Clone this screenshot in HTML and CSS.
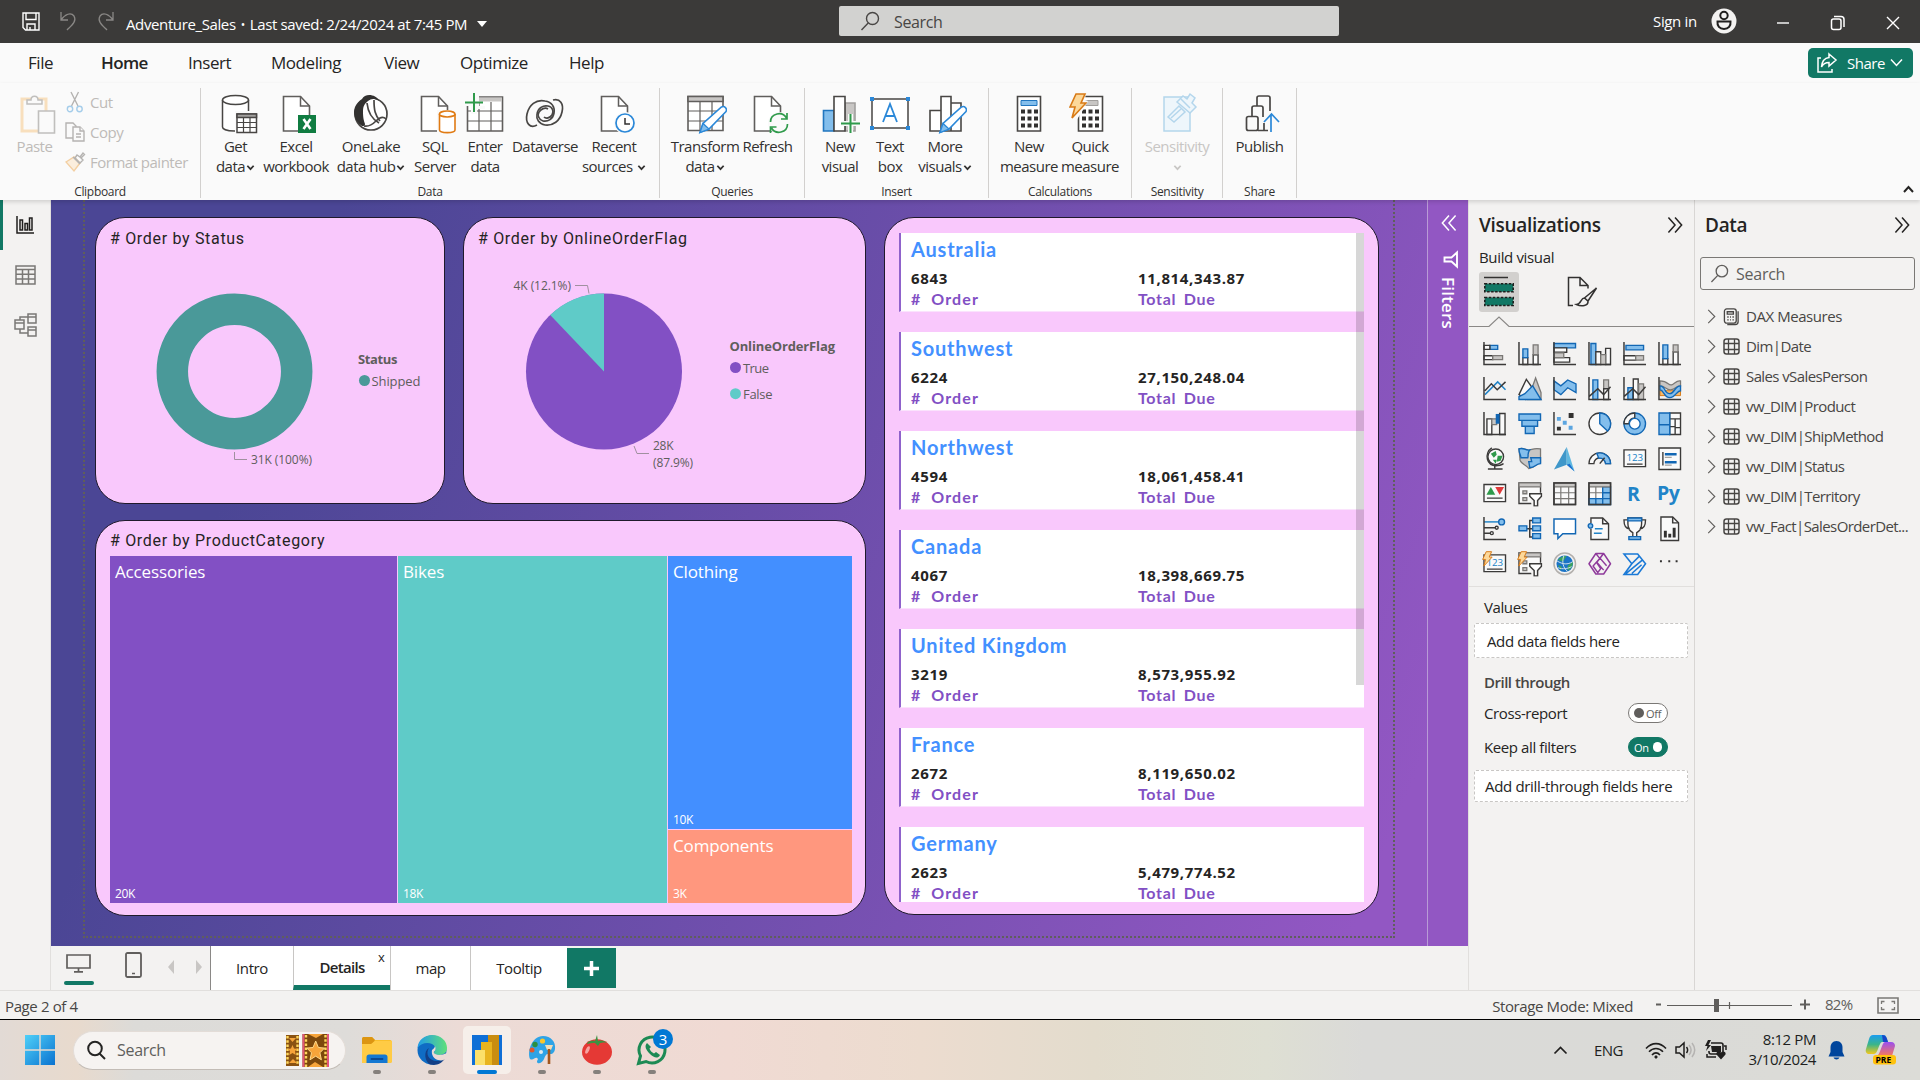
FILE: index.html
```html
<!DOCTYPE html>
<html lang="en">
<head>
<meta charset="utf-8">
<title>Adventure_Sales</title>
<link rel="stylesheet" href="styles.css">
</head>
<body>
<svg class="defs" width="0" height="0">
  <symbol id="doc" viewBox="0 0 40 40"><path d="M7.500 2.500h17l9 9.500v25h-26z" fill="#fff" stroke="#605e5c" stroke-width="1.600"/><path d="M24.500 2.500v9.500h9" fill="none" stroke="#605e5c" stroke-width="1.500"/></symbol>
  <symbol id="pencil" viewBox="0 0 40 40"><path d="M13 38.500l3-9L34.500 13c3-1.500 6 1.500 4.500 4.500L22 35z" fill="#fff" stroke="#2b88d8" stroke-width="1.600"/><path d="M13 38.500l3-9 6 5.500z" fill="#83beec" stroke="#2b88d8" stroke-width="1.300"/></symbol>
  <symbol id="caret" viewBox="0 0 10 8"><path d="M1.500 1.500L5 5.200l3.500-3.700" fill="none" stroke="currentColor" stroke-width="2"/></symbol>
  <symbol id="more" viewBox="0 0 18 18"><path d="M1.500 1l7 8-7 8M8.500 1l7 8-7 8" fill="none" stroke="currentColor" stroke-width="1.600"/></symbol>
  <symbol id="lens" viewBox="0 0 20 20"><circle cx="12.500" cy="7.500" r="6" fill="none" stroke="currentColor" stroke-width="1.400"/><path d="M8.200 12L1.500 19" stroke="currentColor" stroke-width="1.400"/></symbol>
  <symbol id="chev" viewBox="0 0 9 16"><path d="M1 1l7 7-7 7" fill="none" stroke="#605e5c" stroke-width="1.200"/></symbol>
  <symbol id="tbl" viewBox="0 0 17 17"><rect x="1" y="1" width="15" height="15" rx="2.500" fill="none" stroke="#484644" stroke-width="1.500"/><path d="M5.500 1v15M11.500 1v15M1 5.500h15M1 11.500h15" stroke="#484644" stroke-width="1.300"/></symbol>
  <symbol id="bolt" viewBox="0 0 18 26"><path d="M7 1h9l-4 9h5L3 25l3-11H1z" fill="#fcd89a" stroke="#d87a16" stroke-width="1.600"/></symbol>
  <symbol id="funnel" viewBox="0 0 14 14"><path d="M1 1h12v2.500L9 8v5.500H5.500V8L1 3.500z" fill="#fff" stroke="#3b3a39" stroke-width="1.500"/></symbol>
</svg>

<header class="titlebar">
  <div class="quick">
    <svg width="18" height="19" viewBox="0 0 18 19" fill="none" stroke="#fff" stroke-width="1.400"><path d="M1 1h16v17H3.500L1 15.500zM4 1v6.500h10V1M5 18v-6h8v6M8 15v3"/></svg>
    <svg width="17" height="19" viewBox="0 0 17 19" fill="none" stroke="#8a8886" stroke-width="1.300"><path d="M1 0v8h7M1 8c4-6 10-8 13-4 3 5-2 9-7 14"/></svg>
    <svg width="17" height="19" viewBox="0 0 17 19" fill="none" stroke="#8a8886" stroke-width="1.300"><path d="M16 0v8H9M16 8C12 2 6 0 3 4c-3 5 2 9 7 14"/></svg>
  </div>
  <div class="doc-name">Adventure_Sales <span class="bul">•</span> Last saved: 2/24/2024 at 7:45 PM<i class="tri"></i></div>
  <div class="topsearch"><svg width="20" height="20"><use href="#lens"/></svg><span>Search</span></div>
  <div class="account">
    <span>Sign in</span>
    <svg width="26" height="26" viewBox="0 0 26 26"><circle cx="13" cy="13" r="12.500" fill="#f3f2f1"/><circle cx="13" cy="7.500" r="3.700" fill="none" stroke="#201f1e" stroke-width="2"/><path d="M6.500 13.500h13c.5 4.500-2 7.500-6.500 7.500s-7-3-6.500-7.500z" fill="none" stroke="#201f1e" stroke-width="2"/></svg>
  </div>
  <div class="winbtns">
    <svg width="14" height="16" viewBox="0 0 14 16"><path d="M1 8h12" stroke="#fff" stroke-width="1.400"/></svg>
    <svg width="16" height="16" viewBox="0 0 16 16" fill="none" stroke="#fff" stroke-width="1.500"><rect x="1.500" y="4" width="9.500" height="10.500" rx="2"/><path d="M4 1.500h7c2 0 3 1 3 3V12"/></svg>
    <svg width="14" height="14" viewBox="0 0 14 14"><path d="M1 1l12 12M13 1L1 13" stroke="#fff" stroke-width="1.400"/></svg>
  </div>
</header>

<nav class="menu">
  <span class="m1">File</span><span class="m2">Home</span><span class="m3">Insert</span><span class="m4">Modeling</span><span class="m5">View</span><span class="m6">Optimize</span><span class="m7">Help</span>
  <button class="share"><svg width="20" height="20" viewBox="0 0 20 20" fill="none" stroke="#fff" stroke-width="1.500"><path d="M4 5H1v14h14v-3M12 1l7 6-7 6V9.500C8 9.500 6 11 4.500 14 5 8 8 5 12 4.500z"/></svg><span>Share</span><svg width="13" height="9" viewBox="0 0 13 9"><path d="M1 1.500l5.500 6 5.500-6" fill="none" stroke="#fff" stroke-width="1.500"/></svg></button>
</nav>

<section class="ribbon">
  <div class="group g-clip">
    <div class="items">
      <div class="item paste">
        <svg viewBox="0 0 40 40"><path d="M7 5h24v32H7z" fill="none" stroke="#f8dfbd" stroke-width="3"/><path d="M12 10V6h4c0-5 7-5 7 0h4v4z" fill="#fafafa" stroke="#c0bfbd" stroke-width="1.500"/><path d="M23.500 17h16v22h-16z" fill="#fafafa" stroke="#c0bfbd" stroke-width="1.600"/></svg>
        <span>Paste</span>
      </div>
      <div class="cliplist">
        <div><svg width="20" height="20" viewBox="0 0 20 20" fill="none" stroke-width="1.400"><path d="M6 0l7 14M13.500 0l-7 14" stroke="#b5b3b1"/><circle cx="5" cy="17" r="2.700" stroke="#a5cdea"/><circle cx="14.500" cy="17" r="2.700" stroke="#a5cdea"/></svg><span>Cut</span></div>
        <div><svg width="20" height="20" viewBox="0 0 20 20" fill="#fafafa" stroke="#b5b3b1" stroke-width="1.400"><path d="M1 1h7l3 3v12H1z"/><path d="M8 5h7l4 4v10H8z"/><path d="M15 5v4h4M11 12h5M11 15h5"/></svg><span>Copy</span></div>
        <div><svg width="20" height="20" viewBox="0 0 20 20" fill="none" stroke="#b5b3b1" stroke-width="1.400"><path d="M1 10l8-5 6 6-6 8z" stroke="#f3cfa2" fill="#fbeedd"/><path d="M8 5l7 7M10 6l2-3 3 2 3-4 1.500 1.500L16 6l2 2-3 3z"/></svg><span>Format painter</span></div>
      </div>
    </div>
    <div class="glabel">Clipboard</div>
  </div>
  <div class="group g-data">
    <div class="items">
      <div class="item w61"><svg viewBox="0 0 40 40" fill="#fff" stroke="#484644" stroke-width="1.500"><path d="M6.500 6v27c0 2 4 4 12 4s14-2 14-4V6"/><ellipse cx="19.500" cy="6" rx="13" ry="4.500"/><path d="M19 17h22v23H19z" fill="#fafafa" stroke="none"/><path d="M21 20h19.500v18.500H21z"/><path d="M21 20h19.500v3.500H21z" fill="#a19f9d"/><path d="M27.500 23v15M34 23v15M21 28.500h19M21 33.500h19" stroke-width="1.200"/></svg><span>Get</span><span>data<svg class="cr"><use href="#caret"/></svg></span></div>
      <div class="item w60"><svg viewBox="0 0 40 40"><use href="#doc"/><rect x="22" y="21" width="18" height="18" fill="#107c41"/><path d="M27.500 25l7 10M34.500 25l-7 10" stroke="#fff" stroke-width="2.600"/></svg><span>Excel</span><span>workbook</span></div>
      <div class="item w90"><svg viewBox="0 0 40 40"><circle cx="20" cy="20" r="16" fill="#fff" stroke="#484644" stroke-width="1.700"/><path d="M11 5C14-1 25 0 28 7c-5-3-8-2-11 0-4 3-5 6-5 11 0 6 1 9 2 12 0 2-1 2-3 2C2 26-1 13 11 5z" fill="#323130"/><path d="M16 9c1 10 5 16 12 20M23 6c0 10 1 15 6 21M13 32c5 1 9-2 12-5 5-5 8-4 10-2" fill="none" stroke="#484644" stroke-width="1.700"/></svg><span>OneLake</span><span>data hub<svg class="cr"><use href="#caret"/></svg></span></div>
      <div class="item w38"><svg viewBox="0 0 40 40"><use href="#doc" x="-1"/><path d="M22 16h19v23H22z" fill="#fafafa"/><path d="M24.500 20v16c0 3.500 15.500 3.500 15.500 0V20" fill="#fff" stroke="#e07b14" stroke-width="1.600"/><ellipse cx="32.200" cy="20" rx="7.800" ry="3" fill="#fff" stroke="#e07b14" stroke-width="1.600"/></svg><span>SQL</span><span>Server</span></div>
      <div class="item w62"><svg viewBox="0 0 40 40" fill="#fff" stroke="#605e5c" stroke-width="1.600"><path d="M2.500 3h35v34h-35z"/><path d="M3 3.500h34v4H3z" fill="#c8c6c4" stroke="none"/><path d="M2.500 17h35M2.500 27h35M14 8v29M26 8v29" stroke-width="1.200"/><path d="M-1 -2h15v14h6v3h-8v5H6v-8h-7z" fill="#fafafa" stroke="none"/><path d="M9 -1v19M0 8.500h18" stroke="#2f9a4b" stroke-width="2"/></svg><span>Enter</span><span>data</span></div>
      <div class="item w58"><svg viewBox="0 0 40 40" fill="none" stroke="#484644" stroke-width="1.700"><path d="M28 6c7-2 11 4 9 12-2 9-9 14-17 13-6-1-9-6-8-11 1-6 6-9 11-8s6 6 4 9-6 4-8 2"/><path d="M12 31C5 35 0 29 2 20 4 11 11 5 20 7c7 1 10 6 9 12-1 6-6 9-11 8-4-1-6-6-4-9s6-5 9-3"/></svg><span>Dataverse</span></div>
      <div class="item w80"><svg viewBox="0 0 40 40"><use href="#doc"/><circle cx="31" cy="29" r="11" fill="#fafafa"/><circle cx="31" cy="29" r="9" fill="#fff" stroke="#2b88d8" stroke-width="1.700"/><path d="M31 24v6h5" fill="none" stroke="#323130" stroke-width="1.500"/></svg><span>Recent</span><span>sources <svg class="cr"><use href="#caret"/></svg></span></div>
    </div>
    <div class="glabel">Data</div>
  </div>
  <div class="group g-query">
    <div class="items">
      <div class="item w80"><svg viewBox="0 0 40 40" fill="#fff" stroke="#605e5c" stroke-width="1.600"><path d="M3 2.500h35v34H3z"/><path d="M3 2.500h35v5H3z" fill="#c8c6c4"/><path d="M3 17h35M3 27h35M15 8v29M27 8v29" stroke-width="1.200"/><use href="#pencil" x="2" y="0"/></svg><span>Transform</span><span>data<svg class="cr"><use href="#caret"/></svg></span></div>
      <div class="item w45"><svg viewBox="0 0 40 40"><use href="#doc" x="-1"/><circle cx="31" cy="29" r="11" fill="#fafafa"/><path d="M22.500 28c0-9 12-11 16-4M39 19v6h-6M39.500 30c0 9-12 11-16 4M22.500 39v-6h6" fill="none" stroke="#2f9a4b" stroke-width="1.700"/></svg><span>Refresh</span></div>
    </div>
    <div class="glabel">Queries</div>
  </div>
  <div class="group g-insert">
    <div class="items">
      <div class="item w50"><svg viewBox="0 0 40 40" stroke-width="1.600"><path d="M25 9h10v28H25z" fill="#c8c6c4" stroke="#a19f9d"/><path d="M3.500 16.500H14V37H3.500z" fill="#83beec" stroke="#2176bf"/><path d="M14 2.500h11V37H14z" fill="#fff" stroke="#484644"/><path d="M30.500 20v19M21 29.500h19" stroke="#fafafa" stroke-width="5"/><path d="M30.500 20v19M21 29.500h19" stroke="#2f9a4b" stroke-width="2"/></svg><span>New</span><span>visual</span></div>
      <div class="item w50"><svg viewBox="0 0 40 40"><path d="M2 5h36v29H2z" fill="#fff" stroke="#484644" stroke-width="1.500"/><path d="M0 3h4v4H0zM36 3h4v4h-4zM0 32h4v4H0zM36 32h4v4h-4z" fill="#2b88d8"/><path d="M13 28l7-18 7 18M15.500 22h9" fill="none" stroke="#2b88d8" stroke-width="1.800"/></svg><span>Text</span><span>box</span></div>
      <div class="item w60"><svg viewBox="0 0 40 40" fill="#fff" stroke="#484644" stroke-width="1.600"><path d="M5 16.500h11V37H5zM26 9h10v28H26zM16 2.500h10V37H16z"/><use href="#pencil" x="2" y="0"/></svg><span>More</span><span>visuals<svg class="cr"><use href="#caret"/></svg></span></div>
    </div>
    <div class="glabel">Insert</div>
  </div>
  <div class="group g-calc">
    <div class="items">
      <div class="item w60"><svg viewBox="0 0 40 40"><path d="M8.500 2.500h23V37h-23z" fill="#fff" stroke="#484644" stroke-width="1.600"/><path d="M12 6.500h16v5H12z" fill="#83beec" stroke="#2176bf"/><path d="M12 17.500h17M12 24.500h17M12 31.500h17" stroke="#323130" stroke-width="4" stroke-dasharray="4 2.500"/></svg><span>New</span><span>measure</span></div>
      <div class="item w62"><svg viewBox="0 0 40 40"><path d="M8.500 2.500h24V37h-24z" fill="#fff" stroke="#484644" stroke-width="1.600"/><path d="M15 6.500h13v5H15z" fill="#c8c6c4" stroke="#a19f9d"/><path d="M12 17.500h17M12 24.500h17M12 31.500h17" stroke="#323130" stroke-width="4" stroke-dasharray="4 2.500"/><path d="M-1 -2h17l-1 8 3 1-5 9-7 11h-7z" fill="#fafafa"/><use href="#bolt" x="-1" y="-1" width="18" height="26"/></svg><span>Quick</span><span>measure</span></div>
    </div>
    <div class="glabel">Calculations</div>
  </div>
  <div class="group g-sens">
    <div class="items">
      <div class="item w90 off"><svg viewBox="0 0 40 40" fill="#eef6fb" stroke="#b4d6ec" stroke-width="1.500"><path d="M7 3h26v34H7z"/><path d="M11 23l11-11 6 6-11 10z"/><path d="M14 24l10-9" /><path d="M20 8l6-6 4 3 3-5 5 4-3 5 4 4-6 6z"/><path d="M24 5l9 9"/></svg><span>Sensitivity</span><span><svg class="cr"><use href="#caret"/></svg></span></div>
    </div>
    <div class="glabel">Sensitivity</div>
  </div>
  <div class="group g-share">
    <div class="items">
      <div class="item w73"><svg viewBox="0 0 40 40" fill="none" stroke="#484644" stroke-width="1.700"><rect x="6.500" y="22.500" width="11.500" height="14" rx="2"/><path d="M12 22V14c0-1 1-2 2-2h7c1 0 2 1 2 2v9M17 12V4c0-1 1-2 2-2h9c1 0 2 1 2 2v13M18 36.500h10M24 29v7"/><path d="M31 38V20M24 28l7.500-8 7.500 8" stroke="#2b88d8"/></svg><span>Publish</span></div>
    </div>
    <div class="glabel">Share</div>
  </div>
  <svg class="collapse" width="11" height="9" viewBox="0 0 11 9"><path d="M1 7l4.500-5L10 7" fill="none" stroke="#252423" stroke-width="2"/></svg>
</section>

<main class="work">
  <aside class="rail">
    <div class="on"><svg width="18" height="18" viewBox="0 0 18 18" fill="none" stroke="#201f1e" stroke-width="1.500"><path d="M1 0v17h17M4 14V4h2.500v10zM9 14V7.500h2.500V14zM13.500 14V2H16v12z"/></svg></div>
    <div><svg width="21" height="20" viewBox="0 0 21 20" fill="none" stroke="#7a7875" stroke-width="1.500"><path d="M1 1h19v18H1zM1 4.500h19M1 9.300h19M1 14h19M7.500 4.500V19M13.500 4.500V19"/></svg></div>
    <div><svg width="23" height="24" viewBox="0 0 23 24" fill="none" stroke="#7a7875" stroke-width="1.500"><path d="M1 7h9v9H1zM1 10h9M14 1h8v9h-8zM14 4h8M14 14h8v9h-8zM14 17h8M6 7V4h8M6 16v4h8"/></svg></div>
  </aside>

  <div class="center">
    <div class="stage">
      <div class="canvas">
        <div class="page">
          <div class="left">
            <div class="pair">
              <article class="card c-status">
                <h3>#&nbsp;Order by Status</h3>
                <svg width="347" height="284" viewBox="96 218 347 284">
                  <circle cx="234.500" cy="371.500" r="62.200" fill="none" stroke="#4a9999" stroke-width="31.500"/>
                  <path d="M234.500 452v7.500h12.500" fill="none" stroke="#a0909f"/>
                  <g class="lbl"><text x="251" y="464" textLength="61">31K (100%)</text></g>
                  <text class="lt" x="358" y="364" textLength="39.500">Status</text>
                  <circle cx="364.500" cy="380.500" r="5.500" fill="#4a9999"/>
                  <text class="lv" x="371.500" y="386" textLength="49">Shipped</text>
                </svg>
              </article>
              <article class="card c-flag">
                <h3>#&nbsp;Order by OnlineOrderFlag</h3>
                <svg width="401" height="284" viewBox="464 218 401 284">
                  <circle cx="604" cy="371.500" r="78" fill="#8250c4"/>
                  <path d="M604 371.500L550.250 315A78 78 0 0 1 604 293.500z" fill="#5fcbc8"/>
                  <path d="M575 285.500h12.500l1.500 8M634 446l3 7.500h12" fill="none" stroke="#a0909f"/>
                  <g class="lbl"><text x="513.500" y="290" textLength="57.500">4K (12.1%)</text><text x="653" y="450" textLength="20.500">28K</text><text x="653" y="467" textLength="40">(87.9%)</text></g>
                  <text class="lt" x="729.500" y="351" textLength="105.500">OnlineOrderFlag</text>
                  <circle cx="735.500" cy="367.500" r="5.500" fill="#8250c4"/><circle cx="735.500" cy="393.700" r="5.500" fill="#5fcbc8"/>
                  <text class="lv" x="743" y="373" textLength="26">True</text>
                  <text class="lv" x="743" y="399" textLength="29.500">False</text>
                </svg>
              </article>
            </div>
            <article class="card c-tree">
              <h3>#&nbsp;Order by ProductCategory</h3>
              <div class="treemap">
                <div class="tile acc"><b>Accessories</b><i>20K</i></div>
                <div class="tile bik"><b>Bikes</b><i>18K</i></div>
                <div class="tcol">
                  <div class="tile clo"><b>Clothing</b><i>10K</i></div>
                  <div class="tile com"><b>Components</b><i>3K</i></div>
                </div>
              </div>
            </article>
          </div>
          <article class="card c-list">
            <div class="rows">
              <div class="row"><h4>Australia</h4><div><b>6843</b><i class="ord"># Order</i></div><div><b>11,814,343.87</b><i>Total Due</i></div></div>
              <div class="row"><h4>Southwest</h4><div><b>6224</b><i class="ord"># Order</i></div><div><b>27,150,248.04</b><i>Total Due</i></div></div>
              <div class="row"><h4>Northwest</h4><div><b>4594</b><i class="ord"># Order</i></div><div><b>18,061,458.41</b><i>Total Due</i></div></div>
              <div class="row"><h4>Canada</h4><div><b>4067</b><i class="ord"># Order</i></div><div><b>18,398,669.75</b><i>Total Due</i></div></div>
              <div class="row"><h4>United Kingdom</h4><div><b>3219</b><i class="ord"># Order</i></div><div><b>8,573,955.92</b><i>Total Due</i></div></div>
              <div class="row"><h4>France</h4><div><b>2672</b><i class="ord"># Order</i></div><div><b>8,119,650.02</b><i>Total Due</i></div></div>
              <div class="row last"><h4>Germany</h4><div><b>2623</b><i class="ord"># Order</i></div><div><b>5,479,774.52</b><i>Total Due</i></div></div>
              <div class="thumb"></div>
            </div>
          </article>
        </div>
      </div>
      <div class="filters">
        <svg class="flip" width="17" height="18"><use href="#more"/></svg>
        <svg class="ff" width="15" height="17" viewBox="0 0 15 17"><path d="M14 1.500v14L8.500 10.500H1.500v-4h7z" fill="none" stroke="#fff" stroke-width="1.900"/></svg>
        <span>Filters</span>
      </div>
    </div>
    <div class="tabs">
      <div class="views">
        <div class="desk"><svg width="25" height="19" viewBox="0 0 25 19" fill="none" stroke="#605e5c" stroke-width="1.700"><path d="M1 1h23v13H1zM12.500 14v4M8 17.800h9"/></svg><i></i></div>
        <svg class="phone" width="17" height="26" viewBox="0 0 17 26"><rect x="1" y="1" width="15" height="24" rx="1.500" fill="none" stroke="#605e5c" stroke-width="1.800"/><path d="M7 21.500h3" stroke="#605e5c" stroke-width="1.500"/></svg>
        <i class="al"></i><i class="ar"></i>
      </div>
      <div class="tab t1">Intro</div>
      <div class="tab t2">Details<span>x</span></div>
      <div class="tab t3">map</div>
      <div class="tab t4">Tooltip</div>
      <div class="add"><svg width="15" height="15" viewBox="0 0 15 15"><path d="M7.500 0v15M0 7.500h15" stroke="#fff" stroke-width="3.500"/></svg></div>
    </div>
  </div>

  <aside class="viz">
    <div class="phead"><h2>Visualizations</h2><svg width="17" height="18"><use href="#more"/></svg></div>
    <div class="sub">Build visual</div>
    <div class="modes">
      <div class="mode"><svg width="30" height="31" viewBox="0 0 30 31"><path d="M0 1.500h24" stroke="#323130" stroke-width="1.500"/><path d="M.8 7.800h28.400v8H.8zM.8 21.500h28.400v8H.8z" fill="#117865" stroke="#201f1e" stroke-width="1.600" stroke-dasharray="2.500 1.500"/></svg></div>
      <svg class="brush" width="31" height="31" viewBox="0 0 31 31" fill="none" stroke="#323130" stroke-width="1.500"><path d="M6 29.500H1.500v-28H13l8 8v3M13 1.500v8h8"/><path d="M29.500 12L21 25l-3.500-3zM17.500 22c-4 0-3 6-8 6.500 5 2.500 12 1.500 11.500-3.500z" fill="#f3f2f1"/></svg>
    </div>
    <svg class="notch" width="225" height="12" viewBox="0 0 225 12"><path d="M0 10.500h20L30 1l10 9.500h185" fill="none" stroke="#8a8886" stroke-width="1.200"/></svg>
    <div class="vgrid">
      <svg viewBox="0 0 24 24"><path class="b" d="M7 3.500h8v4H7z"/><path class="w" d="M1 3.500h6v4H1zM1 14h9v4H1z"/><path class="g" d="M10 14h10v4H10z"/><path class="x" d="M1 0v23h22.500"/></svg>
      <svg viewBox="0 0 24 24"><path class="w" d="M5 16h5v7H5zM15.500 13h5v10h-5z"/><path class="b" d="M5 7h5v9H5z"/><path class="g" d="M15.500 3h5v10h-5z"/><path class="x" d="M1 0v23h22.500"/></svg>
      <svg viewBox="0 0 24 24"><path class="b" d="M1 1.500h22v4.500H1z"/><path class="w" d="M1 6h13v4.500H1zM1 16h16v4.500H1z"/><path class="g" d="M1 11h10v5H1z"/><path class="x" d="M1 0v23h22.500"/></svg>
      <svg viewBox="0 0 24 24"><path class="b" d="M3 1.500h5V23H3z"/><path class="w" d="M8 10h5v13H8zM18 6.500h5V23h-5z"/><path class="g" d="M13 13h5v10h-5z"/><path class="x" d="M1 0v23h22.500"/></svg>
      <svg viewBox="0 0 24 24"><path class="b" d="M3 3.500h18v4.500H3z"/><path class="w" d="M1 14h12v4.500H1z"/><path class="g" d="M13 14h8v4.500h-8z"/><path class="x" d="M1 0v23h22.500"/></svg>
      <svg viewBox="0 0 24 24"><path class="w" d="M5 17h5v6H5zM15.500 10h5v13h-5z"/><path class="b" d="M5 3h5v14H5z"/><path class="g" d="M15.500 3h5v7h-5z"/><path class="x" d="M1 0v23h22.500"/></svg>

      <svg viewBox="0 0 24 24"><path class="sb" d="M2 18L15 5l8 8"/><path class="x" d="M2 14l6.500-7 6 6L23 5M1 0v23h22.500"/></svg>
      <svg viewBox="0 0 24 24"><path class="g" d="M18 1l5.500 15v7H10z"/><path class="w" d="M1 18L8.500 2.500 16 13 8 23z"/><path class="b" d="M1 23v-3l6-3 8-8 8.500 14z"/></svg>
      <svg viewBox="0 0 24 24"><path class="b" d="M1 4l7 5 7-6 8.500 4v9L15 11l-7 7-7-5z"/><path class="x" d="M1 0v23h22.500"/></svg>
      <svg viewBox="0 0 24 24"><path class="b" d="M5 3h5v20H5z"/><path class="g" d="M16 3h5v9h-5z"/><path class="w" d="M16 12h5v11h-5z"/><path class="x" d="M1 20l9-8 6 6 7-8M1 0v23h22.500"/></svg>
      <svg viewBox="0 0 24 24"><path class="b" d="M5 11h5v12H5z"/><path class="w" d="M10.500 2h5v21h-5z"/><path class="g" d="M16 7h5v16h-5z"/><path class="x" d="M1 20l9-8 6 6 7-8M1 0v23h22.500"/></svg>
      <svg viewBox="0 0 24 24"><path d="M2 14h21v5H2z" fill="#f7b96a" stroke="#d87a16"/><path class="g" d="M2 4c9 0 8 5 12 4 3-1 5-5 9-4v5c-5 0-5 4-9.500 4-5 1-6-4-11.500-4z"/><path class="b" d="M2 9c6 0 4 8 10 8 5 0 5-8 11-8v5c-4 0-5 7-11 7-6 0-6-8-10-8z"/><path class="x" d="M1 0v23h22.500"/></svg>

      <svg viewBox="0 0 24 24"><path class="w" d="M4 7h5v16H4zM17 1.500h5.500V23H17z"/><path class="g" d="M9 7h5v6H9z"/><path class="solid" d="M13 2h4v10h-4z"/><path class="x" d="M1 0v23h22.500"/></svg>
      <svg viewBox="0 0 24 24"><path class="b" d="M1 2h22v6.500H1zM4 8.500h16v6H4zM7.500 14.500h9V22h-9z"/></svg>
      <svg viewBox="0 0 24 24"><path class="x" d="M1 0v23h22.500"/><path d="M4 5h4v4H4zM10 9h4v4h-4zM16 14h4v4h-4z" fill="#5ba5e0"/><path d="M16 1h5v5h-5zM4 15h4v4H4z" fill="#323130"/></svg>
      <svg viewBox="0 0 24 24"><circle class="w" cx="12" cy="12" r="11"/><path class="b" d="M12 1v11l8 7.500A11 11 0 0 0 12 1z"/></svg>
      <svg viewBox="0 0 24 24"><circle class="b" cx="12" cy="12" r="11"/><path class="w" d="M12 1A11 11 0 0 0 1 12h5a6 6 0 0 1 6-6z"/><circle cx="12" cy="12" r="5.500" fill="#fff" stroke="#1267b4" stroke-width="1.400"/></svg>
      <svg viewBox="0 0 24 24"><path class="w" d="M12 1h11v22H12zM12 7h11M17.500 7v16M12 15h6M17.500 16h6"/><path class="b" d="M1 1h11v12H1zM1 13h11v10H1z"/></svg>

      <svg viewBox="0 0 24 24"><path class="x" d="M9 1c-8 5-6 19 6 18 3 0 4-1 6-2M12 19v3M5 22.500h15"/><circle class="w" cx="13" cy="10" r="8"/><path d="M8 7l5-3 1 4-3 3zM15 9l5 0-2 5-4 1zM10 13h4l-1 4z" fill="#2f9a4b"/></svg>
      <svg viewBox="0 0 24 24"><path class="g" d="M1 2c5-2 6 2 11 1 4-1 5-2 11-1v14c-5 1-6 5-12 6-2-4-10-5-9-10z"/><path class="b" d="M1 2c5-2 6 2 11 1-3 4-1 5-2 8H3c0-3-2-4-2-9zM13 11h10v6c-5 0-5 4-11 4l-1-6h3z"/></svg>
      <svg viewBox="0 0 24 24"><path d="M14 0L1 23l13-5z" fill="#3f97c9"/><path d="M14 0v18l8 7z" fill="#5fb8e0"/><path d="M14 18l8 7-5-8z" fill="#1b6fd0"/></svg>
      <svg viewBox="0 0 24 24"><path class="w" d="M1 17A11 11 0 0 1 23 17h-5a6 6 0 0 0-12 0z"/><path class="b" d="M9 6.500A11 11 0 0 1 23 17h-5a6 6 0 0 0-7-5.500z"/><path class="x" d="M12 17l5-6"/></svg>
      <svg viewBox="0 0 24 24"><path class="w" d="M1 3h22v17H1zM4 17.500h16"/><text x="3.500" y="14.500" class="n">123</text></svg>
      <svg viewBox="0 0 24 24"><path class="w" d="M1 1h22v22H1zM5 5v14"/><path d="M7 7.500h12M7 15.500h12" stroke="#1267b4" stroke-width="2.500"/><path d="M7 10.500h7M7 18.500h7" stroke="#8a8886"/></svg>

      <svg viewBox="0 0 24 24"><path class="w" d="M1 2.500h22V20H1zM4 16.500h16"/><path d="M3.500 13l4.500-8 4.500 8z" fill="#2f9a4b"/><path d="M12.500 5h9L17 13z" fill="#e03a3a"/></svg>
      <svg viewBox="0 0 24 24"><path class="w" d="M1 1h22v21H1z"/><path class="g" d="M1 1h22v4H1zM5 9h4v3H5zM5 16h4v3H5z"/><path d="M12 11h14v14H14z" fill="#f3f2f1"/><use href="#funnel" x="11" y="11" width="14" height="14"/></svg>
      <svg viewBox="0 0 24 24"><path class="w" d="M1 1h22v22H1z"/><path class="th" d="M1 11h22M1 17h22M8 5v18M16 5v18"/><path class="g" d="M1 1h22v4H1z"/><path class="x" d="M1 1h22v22H1z"/></svg>
      <svg viewBox="0 0 24 24"><path class="w" d="M1 1h22v22H1z"/><path class="th" d="M1 11h22M8 5v18"/><path class="b" d="M15 5h8v18H1v-6h14zM8 17v6M1 17h7M15 11h8M15 17h8v6h-8z"/><path class="g" d="M1 1h22v4H1z"/><path class="x" d="M1 1h22v22H1z"/></svg>
      <svg viewBox="0 0 24 24"><text x="4" y="19.500" class="rp">R</text></svg>
      <svg viewBox="0 0 24 24"><text x="-1" y="18" class="rp">Py</text></svg>

      <svg viewBox="0 0 24 24"><path class="sb" d="M1 5h18"/><path class="x" d="M1 11h12M1 16.500h7M1 0v23h22.500"/><circle class="b" cx="19" cy="5" r="3"/><circle class="w" cx="14" cy="11" r="1.500"/><circle class="w" cx="9" cy="16.500" r="1.500"/></svg>
      <svg viewBox="0 0 24 24"><path class="x" d="M9 12h5M15 3.500h-3v17h3M12 12h3"/><path class="b" d="M1 9h8v5H1zM15 1h8v5h-8zM15 9h8v5h-8zM15 17h8v5h-8z"/></svg>
      <svg viewBox="0 0 24 24"><path d="M1 2h22v15H10l-5 5v-5H1z" fill="#fff" stroke="#1267b4" stroke-width="1.500"/></svg>
      <svg viewBox="0 0 24 24"><path class="w" d="M3 6V1h12l6 6v16H3V12"/><path class="x" d="M15 1v6h6"/><path class="sb" d="M7 12h8M6 16.500h8"/><circle class="b" cx="2.500" cy="9" r="2.300"/></svg>
      <svg viewBox="0 0 24 24"><path class="w" d="M5 3H1c0 6 2 9 6 9M19 3h4c0 6-2 9-6 9M5 1h14v6c0 6-3 8-5 9v4h-4v-4c-2-1-5-3-5-9z"/><path class="b" d="M5 1h14v3H5zM6 20h12v3H6z"/></svg>
      <svg viewBox="0 0 24 24"><path class="w" d="M3 0h12l6 6v18H3z"/><path class="x" d="M15 0v6h6"/><path d="M6 14h3v7H6zM10.500 17h3v4h-3zM15 11h3v10h-3z" fill="#323130"/></svg>

      <svg viewBox="0 0 24 24"><path class="w" d="M1 3h22v17H1zM4 17.500h16"/><text x="3.500" y="14.500" class="n">123</text><use href="#bolt" x="-1" y="-1" width="11" height="16"/></svg>
      <svg viewBox="0 0 24 24"><path class="w" d="M1 1h22v21H1z"/><path class="g" d="M1 1h22v4H1zM5 9h4v3H5zM5 16h4v3H5z"/><path d="M12 11h14v14H14z" fill="#f3f2f1"/><use href="#funnel" x="11" y="11" width="14" height="14"/><use href="#bolt" x="-1" y="-1" width="11" height="16"/></svg>
      <svg viewBox="0 0 24 24"><circle cx="12" cy="12" r="11" fill="#f3f2f1" stroke="#b3b0ad" stroke-width="1.500"/><circle cx="12" cy="12" r="8.500" fill="#1a73c7"/><path d="M5 8c4-4 6-4 9-4l-4 6zM15 14l5-4c1 4-2 8-5 9zM5 13l4 2-1 4z" fill="#3da35d"/><path d="M4 9c6 4 11 4 16 1M5 16c5 2 10 1 14-1M11 4c-2 6-1 12 4 16" fill="none" stroke="#cfe0ea"/></svg>
      <svg viewBox="0 0 24 24" fill="none" stroke="#8f3a9b" stroke-width="1.500" stroke-linejoin="round"><path d="M8 1.500h8L23 12l-7 10.500H8L1 12zM8 1.500l4 5-7 8M16 1.500l-7 9 7 8M12 6.500l3-4M19 14l-7-8M5 14l5 7 3-4-4-6"/></svg>
      <svg viewBox="0 0 24 24" fill="none" stroke="#1a79d6" stroke-width="1.600"><path d="M1 2h14l8 10-8 11H1l8-11zM9 12L17 4M3 22L20 8M9 22l10-9"/></svg>
      <svg viewBox="0 0 24 24"><path d="M2 9.500h2M10.500 9.500h2M18 9.500h2" stroke="#323130" stroke-width="2"/></svg>
    </div>
    <div class="wells">
      <div class="wl">Values</div>
      <div class="well">Add data fields here</div>
      <div class="wl dt">Drill through</div>
      <div class="opt">Cross-report<span class="tog"><i></i>Off</span></div>
      <div class="opt">Keep all filters<span class="tog act">On<i></i></span></div>
      <div class="well w2">Add drill-through fields here</div>
    </div>
  </aside>

  <aside class="data">
    <div class="phead"><h2>Data</h2><svg width="17" height="18"><use href="#more"/></svg></div>
    <div class="dsearch"><svg width="19" height="19"><use href="#lens"/></svg>Search</div>
    <ul>
      <li><svg class="ch"><use href="#chev"/></svg><svg class="tb" viewBox="0 0 17 18" fill="none" stroke="#484644" stroke-width="1.400"><rect x="1" y="1" width="12.500" height="15" rx="2.500"/><path d="M15.500 3.500v11c0 2-1 3-3 3H4M4 4h6.500v2.500H4zM4 9.500h1.500M7 9.500h1M9.500 9.500H11M4 12.500h1.500M7 12.500h1M9.500 12.500H11"/></svg><span>DAX Measures</span></li>
      <li><svg class="ch"><use href="#chev"/></svg><svg class="tb"><use href="#tbl"/></svg><span>Dim|Date</span></li>
      <li><svg class="ch"><use href="#chev"/></svg><svg class="tb"><use href="#tbl"/></svg><span>Sales vSalesPerson</span></li>
      <li><svg class="ch"><use href="#chev"/></svg><svg class="tb"><use href="#tbl"/></svg><span>vw_DIM|Product</span></li>
      <li><svg class="ch"><use href="#chev"/></svg><svg class="tb"><use href="#tbl"/></svg><span>vw_DIM|ShipMethod</span></li>
      <li><svg class="ch"><use href="#chev"/></svg><svg class="tb"><use href="#tbl"/></svg><span>vw_DIM|Status</span></li>
      <li><svg class="ch"><use href="#chev"/></svg><svg class="tb"><use href="#tbl"/></svg><span>vw_DIM|Territory</span></li>
      <li><svg class="ch"><use href="#chev"/></svg><svg class="tb"><use href="#tbl"/></svg><span>vw_Fact|SalesOrderDet...</span></li>
    </ul>
  </aside>
</main>

<footer class="status">
  <span class="pg">Page 2 of 4</span>
  <span class="sm">Storage Mode: Mixed</span>
  <svg width="155" height="16" viewBox="0 0 155 16" stroke="#605e5c"><path d="M1 7.500h5M145 7.500h10M150 2.500v10" stroke-width="2"/><path d="M12 8.500h125M74.500 5v7" stroke-width="1.200"/><path d="M61.500 2v13" stroke-width="5"/></svg>
  <span class="pc">82%</span>
  <svg class="fit" width="22" height="17" viewBox="0 0 22 17" fill="none" stroke="#7a7875" stroke-width="1.600"><path d="M1 1h20v15H1z"/><path d="M4.500 7V4.500h3M14.500 4.500h3V7M17.500 10v2.500h-3M7.500 12.500h-3V10" stroke-width="1.300"/></svg>
</footer>

<div class="taskbar">
  <svg class="start" width="30" height="30" viewBox="0 0 30 30"><defs><linearGradient id="wg" x1="0" y1="0" x2="1" y2="1"><stop offset="0" stop-color="#4fd0f8"/><stop offset="1" stop-color="#0a72d0"/></linearGradient></defs><path d="M0 0h14.300v14.300H0zM15.700 0H30v14.300H15.700zM0 15.700h14.300V30H0zM15.700 15.700H30V30H15.700z" fill="url(#wg)"/></svg>
  <div class="tsearch"><svg width="19" height="20" viewBox="0 0 19 20" fill="none" stroke="#252423" stroke-width="2"><circle cx="8" cy="8.500" r="6.800"/><path d="M12.500 13.500L18 19"/></svg><span>Search</span>
    <svg width="43" height="33" viewBox="0 0 43 33"><path d="M0 1h13v31H0z" fill="#8a5212"/><path d="M16.500 0H43v33H16.500z" fill="#7d480c"/><path d="M17.500 0v33M42 0v33" stroke="#e2557a" stroke-width="2"/><path d="M20 1v32M39.500 1v32M1.500 2v29M11.500 2v29" stroke="#ffd75e" stroke-width="2.400" stroke-dasharray="2.500 1.700"/><path d="M29.700 7l2.700 6.500 6.100.6-4.600 4.700 1.500 7-5.700-3.600-5.700 3.600 1.500-7-4.600-4.700 6.100-.6z" fill="#f7a43a" stroke="#ffd98a"/><path d="M22 0h15l-7 4zM22 33l7-5 8 5zM6.500 11l1.500 3.500 3.500.5-2.500 2 .7 4-3.200-2-3.200 2 .7-4-2.500-2 3.500-.5zM3 4h7L6.500 8zM3 29l4-4 4 4z" fill="#f7a43a"/></svg>
  </div>
  <div class="app"><svg width="30" height="30" viewBox="0 0 30 30"><path d="M0 4c0-1.500 1-2 2-2h8l3 3h15c1.500 0 2 1 2 2v19c0 1-1 2-2 2H0z" fill="#f9bf2c"/><path d="M0 4c0-1.500 1-2 2-2h8l3 3-3 4H0z" fill="#dc9512"/><path d="M0 9h9l4-3h17v20c0 1-1 2-2 2H0z" fill="#ffcb45"/><path d="M4.500 28v-6c0-1.500 1-2.500 2.500-2.500h16c1.500 0 2.500 1 2.500 2.500v6z" fill="#1478d2"/><path d="M9.500 24h11" stroke="#0b4a94" stroke-width="1.800" stroke-linecap="round"/></svg></div>
  <div class="app"><svg width="30" height="30" viewBox="0 0 30 30"><defs><linearGradient id="eg" x1="0" y1="0" x2="1" y2="0"><stop offset="0" stop-color="#1f9be8"/><stop offset="1" stop-color="#5fe07a"/></linearGradient></defs><circle cx="15" cy="15" r="14.500" fill="#0f6cc4"/><path d="M.5 13C1 5 8 0 15 0c9 0 15 6 15 13 0 5-4 7-8 7-3 0-5-1-5-2 0-2 2-2 1-6-2-5-13-6-17.500 1z" fill="url(#eg)"/><path d="M12 13c-4 6 0 13 8 13 4 0 6-1 8-3-3 6-9 8-15 6.500C8 27 6 16 12 13z" fill="#133f86"/><path d="M15 15c3-2 3-4 3-4 2 5-2 5-1 7 1 2 7 3 13 0v4c-2 3-5 4-9 3s-7-5-6-10z" fill="#eadbd6"/></svg></div>
  <div class="app cur"><svg width="30" height="30" viewBox="0 0 30 30"><path d="M0 0h30v30H0z" fill="#0f6fd6"/><path d="M16 0h11v30H16z" fill="#c98d10"/><path d="M9 7h11v23H9z" fill="#e8b41f"/><path d="M3 15h10v15H3z" fill="#fbe06a"/></svg></div>
  <div class="app"><svg width="30" height="30" viewBox="0 0 30 30"><path d="M16 1c8 0 13 6 12 13-1 6-5 5-7 5s-3 2-4 5-6 6-7 3c0-2 2-3 0-4s-4 3-7 1C0 16 5 1 16 1z" fill="#2ea3e6"/><circle cx="8" cy="9.500" r="2.700" fill="#2a8f3f"/><circle cx="15.500" cy="6" r="2.600" fill="#f9c62c"/><circle cx="5" cy="15" r="2.500" fill="#e2562b"/><circle cx="14" cy="17" r="2" fill="#dfe9ee"/><path d="M18 10h8l-2 5h-4z" fill="#f2ddb8"/><path d="M22 14v15" stroke="#a2561d" stroke-width="2.600"/></svg></div>
  <div class="app"><svg width="30" height="30" viewBox="0 0 30 30"><ellipse cx="15" cy="17" rx="15" ry="12.800" fill="#e53935"/><path d="M5 9c0-3 5-4 8-3l2-6 1 6c4-1 7 0 9 2-4-1-5 0-7 0l-2 3-3-3c-3 0-5 0-8 1z" fill="#3f9142"/><ellipse cx="5.500" cy="15" rx="1.700" ry="4" fill="#f7a3a0" transform="rotate(25 5.500 15)"/></svg></div>
  <div class="app"><svg width="30" height="30" viewBox="0 0 30 30"><path d="M1.500 28.500l2-7.500A13 13 0 1 1 9 26.500z" fill="none" stroke="#1c8a54" stroke-width="3"/><path d="M10 8c-3 3-1 7 3 11s8 5 10 1l-4-3-2 1.500c-2-1-4-3-4.500-5L14 12z" fill="#1c8a54"/></svg><em>3</em></div>
  <div class="tray">
    <svg width="15" height="10" viewBox="0 0 15 10"><path d="M1.500 8.500l6-6 6 6" fill="none" stroke="#201f1e" stroke-width="1.700"/></svg>
    <span class="eng">ENG</span>
    <svg class="wifi" width="22" height="17" viewBox="0 0 22 17" fill="none" stroke="#201f1e" stroke-width="1.600"><path d="M1 6.500c6-6.500 14-6.500 20 0M4 9.800c4-4.500 10-4.500 14 0M7 13c2.500-2.800 5.500-2.800 8 0"/><circle cx="11" cy="15" r="1.200" fill="#201f1e" stroke-width=".8"/></svg>
    <svg class="spk" width="21" height="18" viewBox="0 0 21 18" fill="none" stroke="#201f1e" stroke-width="1.500"><path d="M1 6h3.500L9 2v14l-4.500-4H1zM11.500 6c1.500 2 1.500 4 0 6"/><path d="M14 4c2.500 3 2.500 7 0 10M17 2c3.500 4.500 3.500 9.500 0 14" stroke="#b5b3b1"/></svg>
    <svg class="bat" width="22" height="20" viewBox="0 0 22 20"><path d="M6 3h10c1.500 0 2 1 2 2v9H6c-1.500 0-2-1-2-2v-1" fill="none" stroke="#201f1e" stroke-width="1.600"/><path d="M6 6h10v6H7z" fill="#201f1e"/><path d="M3 0L0 6h2.500L1 11l5-6H3.500L6 0zM16 19.500l-4.500-5c-1-3 3-4 4.500-2 1.500-2 5.500-1 4.500 2z" fill="#201f1e"/><path d="M2 14v3h9M19 6h2v4" fill="none" stroke="#201f1e" stroke-width="1.500"/></svg>
    <div class="clock"><span>8:12 PM</span><span>3/10/2024</span></div>
    <svg class="bell" width="17" height="20" viewBox="0 0 17 20"><path d="M8.500 1c4 0 6 3 6 6.500V12l2 4.500H.5l2-4.500V7.500C2.500 4 4.500 1 8.500 1zM5.500 17.500h6c-1 2.500-5 2.500-6 0z" fill="#00459c"/></svg>
    <svg class="cop" width="30" height="30" viewBox="0 0 30 30"><defs><linearGradient id="c1" x1="0" y1="0" x2="0" y2="1"><stop offset="0" stop-color="#1a9df0"/><stop offset=".5" stop-color="#3bb58a"/><stop offset="1" stop-color="#f3c81c"/></linearGradient><linearGradient id="c2" x1="0" y1="0" x2="0" y2="1"><stop offset="0" stop-color="#9a4ff0"/><stop offset="1" stop-color="#f77a59"/></linearGradient></defs><path d="M7 0h11c3 0 2 4 4 7h-6c-3 0-4 12-8 12H3c-2 0-4-2-3-5l3-10c1-3 2-4 4-4z" fill="url(#c1)"/><path d="M16 0c4 0 5 3 6 7h-5z" fill="#1547c8"/><path d="M19 7h6c3 0 4 2 4 4l-3 10H11c3-1 5-14 8-14z" fill="url(#c2)"/><rect x="7" y="20" width="23" height="9.500" rx="3" fill="#ffc20e"/><text x="9.500" y="28" class="pre">PRE</text></svg>
  </div>
</div>
</body>
</html>
```

FILE: styles.css
```css
* { box-sizing: border-box; }
html, body { margin: 0; height: 100%; overflow: hidden; }
body { width: 1920px; height: 1080px; display: flex; flex-direction: column; font-family: "Open Sans", "Noto Sans", sans-serif; font-size: 15px; letter-spacing: -0.5px; color: #252423; background: #f3f2f1; }
svg { flex: none; display: block; overflow: visible; }
.defs { position: absolute; }
h2, h3, h4, ul { margin: 0; padding: 0; }
b, i, em { font-style: normal; }

/* title bar */
.titlebar { height: 43px; flex: none; background: #3b3a39; color: #fff; display: flex; align-items: center; }
.quick { display: flex; gap: 20px; padding-left: 22px; width: 126px; }
.doc-name { width: 713px; display: flex; align-items: center; gap: 5px; white-space: nowrap; font-size: 15px; letter-spacing: -0.38px; padding-top: 5px; }
.bul { font-size: 12px; }
.tri { border: 5px solid transparent; border-top: 6px solid #fff; border-bottom: 0; margin-left: 5px; }
.topsearch { width: 500px; height: 30px; margin-top: -1px; background: #d2d2d0; border-radius: 2px; color: #484644; display: flex; align-items: center; padding-left: 21px; gap: 14px; font-size: 16px; letter-spacing: -0.35px; }
.topsearch span { padding-top: 1px; }
.account { margin-left: 314px; width: 84px; display: flex; justify-content: space-between; align-items: center; font-size: 15px; letter-spacing: -0.35px; white-space: nowrap; }
.account span { margin-top: -1px; }
.account svg { margin-top: -1px; }
.winbtns { display: flex; align-items: center; padding: 2px 0 0 39px; gap: 40px; }

/* menu */
.menu { height: 40px; flex: none; background: #fafafa; display: flex; align-items: center; font-size: 17px; letter-spacing: -0.45px; padding-left: 28px; }
.menu > span { white-space: nowrap; margin-top: -2px; }
.m1 { width: 73px; } .m2 { width: 87px; font-weight: 600; letter-spacing: -0.6px; } .m3 { width: 83px; } .m4 { width: 113px; } .m5 { width: 76px; } .m6 { width: 109px; }
.share { margin-left: auto; margin-right: 7px; width: 105px; height: 30px; border: 0; border-radius: 5px; background: #117865; color: #fff; display: flex; align-items: center; padding: 0 0 1px 9px; font: 500 15px "Open Sans", sans-serif; letter-spacing: -0.5px; }
.share span { margin: 0 5px 0 10px; }

/* ribbon */
.ribbon { height: 117px; flex: none; background: #fafafa; display: flex; padding-top: 5px; position: relative; box-shadow: 0 2px 4px rgba(0,0,0,.14); z-index: 2; color: #323130; }
.group { height: 110px; border-right: 1px solid #d2d0ce; display: flex; flex-direction: column; justify-content: space-between; }
.items { display: flex; padding-top: 6px; }
.item { flex: none; display: flex; flex-direction: column; align-items: center; line-height: 20px; white-space: nowrap; }
.item > svg { width: 40px; height: 40px; margin-bottom: 2px; }
.item > span { display: flex; align-items: center; height: 20px; white-space: pre; }
.cr { width: 9px; height: 8px; margin: 4px 0 0 1px; }
.glabel { font-size: 12px; letter-spacing: -0.3px; text-align: center; line-height: 14px; margin-bottom: -1px; }
.g-clip { width: 201px; color: #bebbb8; } .g-clip .glabel { color: #323130; }
.paste { width: 69px; }
.cliplist { margin: -2px 0 0 -4px; display: flex; flex-direction: column; gap: 10px; }
.cliplist div { display: flex; align-items: center; gap: 5px; height: 20px; white-space: nowrap; }
.g-data { width: 459px; } .g-data .items { padding-left: 4px; }
.g-query { width: 145px; } .g-query .items { padding-left: 5px; }
.g-insert { width: 184px; } .g-insert .items, .g-calc .items { padding-left: 10px; }
.g-calc { width: 143px; } .g-sens { width: 91px; } .g-share { width: 74px; }
.off { color: #c8c6c4; }
.w38 { width: 38px; } .w45 { width: 45px; } .w50 { width: 50px; } .w58 { width: 58px; } .w60 { width: 60px; } .w61 { width: 61px; } .w62 { width: 62px; } .w73 { width: 73px; } .w80 { width: 80px; } .w90 { width: 90px; }
.collapse { margin: 97px 6px 0 auto; }

/* work area */
.work { height: 790px; flex: none; display: flex; }
.rail { width: 51px; border-right: 1px solid #e1dfdd; }
.rail div { height: 50px; display: flex; align-items: center; justify-content: center; padding-bottom: 1px; }
.rail .on { border-left: 3px solid #117865; padding-right: 3px; }
.center { width: 1417px; display: flex; flex-direction: column; }
.stage { height: 746px; width: 1417px; display: flex; background: linear-gradient(112deg, #4b4695 0, #4b4695 17%, #9257c3 93%); }
.canvas { width: 1376px; padding-left: 32px; }
.page { width: 1312px; height: 738px; border: 2px dotted #605e5c; border-top: 0; padding: 17px 0 0 10px; display: flex; gap: 18px; }
.left { display: flex; flex-direction: column; gap: 16px; }
.pair { display: flex; gap: 18px; }
.card { background: #f9c8fc; border: 1px solid #201a2c; border-radius: 30px; overflow: hidden; }
.card h3 { font: 400 16px "Roboto", sans-serif; letter-spacing: 0.68px; color: #252423; line-height: 20px; padding: 11px 0 0 14px; white-space: nowrap; }
.c-status, .c-flag { height: 287px; }
.c-status { width: 350px; } .c-flag { width: 403px; }
.c-status svg, .c-flag svg { margin-top: -31px; }
.lbl { font-size: 12px; fill: #605e5c; letter-spacing: 0; }
.lt { font-size: 13px; font-weight: 700; fill: #605e5c; letter-spacing: 0; }
.lv { font-size: 13px; fill: #605e5c; letter-spacing: 0; }
.c-tree { width: 771px; height: 396px; }
.c-tree h3 { padding-top: 10px; }
.treemap { margin: 5px 0 0 14px; width: 742px; height: 347px; display: flex; gap: 1px; }
.tcol { width: 184px; display: flex; flex-direction: column; gap: 1px; }
.tile { color: #fff; display: flex; flex-direction: column; justify-content: space-between; padding: 4px 5px 1px; }
.tile b { font-weight: 400; font-size: 17px; letter-spacing: -0.15px; line-height: 24px; }
.tile i { font-size: 12px; letter-spacing: -0.4px; line-height: 16px; }
.acc { width: 287px; background: #8250c4; } .bik { width: 269px; background: #5fcbc8; }
.clo { height: 273px; background: #438fff; } .com { height: 73px; background: #ff977e; }
.c-list { width: 495px; height: 698px; padding: 15px 0 0 14px; }
.rows { position: relative; width: 465px; height: 669px; overflow: hidden; display: flex; flex-direction: column; gap: 20px; }
.row { flex: none; height: 79px; background: #fff; border-left: 2px solid #8f62cb; border-bottom: 1px solid #fbe3fd; padding-left: 10px; display: grid; grid-template-columns: 227px 1fr; grid-template-rows: 34px 1fr; }
.row.last { height: 75px; border-bottom: 0; }
.row h4 { grid-column: 1 / 3; color: #4390ff; font: 700 20px "Lato", sans-serif; letter-spacing: 0.8px; line-height: 32px; white-space: nowrap; }
.row div { display: flex; flex-direction: column; }
.row b { font-size: 15px; font-weight: 700; letter-spacing: 0.65px; line-height: 23px; }
.row i { color: #8250c4; font: 700 16px "Lato", sans-serif; letter-spacing: 0.7px; word-spacing: 3px; line-height: 18px; white-space: nowrap; }
.row .ord { letter-spacing: 1.1px; word-spacing: 5px; }
.thumb { position: absolute; right: 0; top: 0; width: 8px; height: 452px; background: rgba(0,0,0,.155); }
.filters { width: 41px; border-left: 1px solid #b99bd6; color: #fff; display: flex; flex-direction: column; align-items: center; padding-top: 14px; background: #9257c3; }
.flip { transform: scaleX(-1); }
.ff { margin: 19px 0 0 5px; }
.filters span { writing-mode: vertical-rl; font-weight: 600; font-size: 17px; margin: 9px 0 0 0; letter-spacing: 0.2px; }

/* page tabs */
.tabs { height: 44px; display: flex; font-size: 15px; letter-spacing: -0.4px; }
.views { width: 159px; display: flex; padding-left: 13px; }
.desk { width: 30px; height: 39px; padding: 8px 0 0 2px; display: flex; flex-direction: column; justify-content: space-between; }
.desk i { height: 4px; width: 30px; margin-left: -2px; border-radius: 2px; background: #117865; }
.phone { margin: 6px 0 0 31px; }
.al, .ar { border: 7px solid transparent; height: 14px; margin-top: 14px; }
.al { border-right: 6px solid #c8c6c4; border-left: 0; margin-left: 26px; } .ar { border-left: 6px solid #c8c6c4; border-right: 0; margin-left: 22px; }
.tab { background: #fff; border-left: 1px solid #c8c6c4; display: flex; align-items: center; justify-content: center; position: relative; padding-bottom: 1px; }
.t1 { width: 83px; border-color: #8a8886; } .t2 { width: 97px; font-weight: 600; border-bottom: 5px solid #117865; padding-top: 4px; letter-spacing: -0.7px; } .t3 { width: 80px; } .t4 { width: 97px; }
.t2 span { position: absolute; right: 6px; top: 2px; font-size: 13px; font-weight: 400; }
.add { width: 49px; height: 40px; margin-top: 2px; background: #117865; display: flex; align-items: center; justify-content: center; }

/* panes */
.viz { width: 227px; border-left: 1px solid #e1dfdd; border-right: 1px solid #d8d6d4; }
.phead { display: flex; justify-content: space-between; align-items: center; height: 26px; margin: 12px 10px 0 10px; }
.phead h2 { font-size: 19px; font-weight: 600; letter-spacing: -0.3px; }
.sub { margin: 9px 0 0 10px; line-height: 20px; letter-spacing: -0.35px; }
.modes { display: flex; margin: 5px 0 0 10px; height: 40px; }
.mode { width: 40px; height: 40px; background: #d2d0ce; border-radius: 3px; padding: 4px 5px; }
.brush { margin: 4px 0 0 48px; }
.notch { margin-top: 4px; }
.vgrid { display: grid; grid-template-columns: repeat(6, 35px); grid-auto-rows: 35px; padding: 14px 0 0 14px; height: 259px; border-bottom: 1px solid #e1dfdd; }
.vgrid svg { width: 23.5px; height: 23.5px; }
.x { fill: none; stroke: #3b3a39; stroke-width: 1.5; }
.th { fill: none; stroke: #7a7875; stroke-width: 1.2; }
.w { fill: #fafafa; stroke: #3b3a39; stroke-width: 1.4; }
.g { fill: #c8c6c4; stroke: #7a7875; stroke-width: 1.3; }
.b { fill: #83beec; stroke: #1267b4; stroke-width: 1.4; }
.solid { fill: #1267b4; }
.sb { fill: none; stroke: #2184c8; stroke-width: 1.5; }
.n { font: 10px "Open Sans", sans-serif; fill: #2184c8; letter-spacing: 0; }
.rp { font: 700 20px "Open Sans", sans-serif; fill: #2184c8; letter-spacing: -0.5px; }
.wells { padding: 10px 6px 0 5px; letter-spacing: -0.4px; }
.wl { padding-left: 10px; line-height: 20px; }
.well { margin-top: 6px; height: 35px; background: #fff; border: 1px dashed #c8c6c4; border-radius: 2px; line-height: 34px; padding-left: 12px; white-space: nowrap; letter-spacing: -0.38px; }
.dt { margin-top: 14px; font-weight: 600; color: #484644; letter-spacing: -0.5px; }
.opt { display: flex; justify-content: space-between; align-items: center; height: 20px; margin: 11px 20px 0 10px; }
.opt + .opt { margin-top: 14px; }
.tog { width: 40px; height: 20px; border: 1px solid #7a7875; border-radius: 10px; background: #fff; font-size: 11px; letter-spacing: -0.3px; color: #605e5c; display: flex; align-items: center; padding: 0 5px; gap: 2px; }
.tog i { width: 10px; height: 10px; border-radius: 5px; background: #605e5c; }
.act { background: #117865; border-color: #117865; color: #fff; gap: 4px; }
.act i { background: #fff; }
.w2 { margin-top: 13px; height: 32px; line-height: 31px; padding-left: 10px; letter-spacing: -0.33px; }
.data { width: 225px; }
.data .phead { margin-right: 9px; }
.dsearch { margin: 19px 5px 0; height: 33px; border: 1px solid #7a7875; border-radius: 3px; display: flex; align-items: center; gap: 7px; padding-left: 9px; font-size: 16px; letter-spacing: -0.25px; color: #605e5c; }
.data ul { list-style: none; padding-top: 11px; }
.data li { height: 30px; display: flex; align-items: center; padding-left: 12px; color: #484644; white-space: nowrap; letter-spacing: -0.6px; }
.data li:first-child { letter-spacing: -0.45px; }
.ch { width: 9px; height: 15px; margin-right: 7px; }
.tb { width: 17px; height: 17px; margin-right: 6px; }

/* status bar */
.status { height: 30px; flex: none; border-top: 1px solid #e1dfdd; border-bottom: 1px solid #000; display: flex; align-items: center; color: #484644; padding: 2px 21px 0 5px; letter-spacing: -0.38px; }
.pg { width: 1488px; }
.sm { width: 163px; white-space: nowrap; }
.status > svg { margin-top: -2px; }
.pc { margin: -4px 0 0 15px; width: 52px; letter-spacing: -0.75px; color: #605e5c; }

/* taskbar */
.taskbar { height: 60px; flex: none; display: flex; align-items: center; background: linear-gradient(90deg, #e2dad5 0, #e8dacd 4%, #dcdbd8 7%, #dedcd9 18%, #ecdbd6 24%, #f0dad3 38%, #ecdccf 48%, #e3dccd 57%, #dedfd3 66%, #dadad8 71%, #dadad7 85%, #dcdcd7 100%); }
.start { margin: 0 18px 0 25px; }
.tsearch { width: 273px; height: 39px; border-radius: 20px; background: #f6f3f1; border: 1px solid #e3dcd7; border-bottom-color: #c3bcb6; display: flex; align-items: center; padding-left: 13px; color: #605e5c; font-size: 16px; letter-spacing: -0.3px; margin-right: 7px; }
.tsearch span { width: 180px; padding: 0 0 0 11px; }
.app { width: 48px; height: 48px; margin-right: 7px; position: relative; display: flex; align-items: center; justify-content: center; }
.app::after { content: ""; position: absolute; bottom: 0; left: 20px; width: 8px; height: 4px; border-radius: 2px; background: #85807c; }
.cur { background: #f6efea; border-radius: 5px; }
.cur::after { width: 20px; left: 14px; background: #0078d4; }
.app em { position: absolute; left: 25px; top: 3px; width: 20px; height: 20px; border-radius: 10px; background: #0078d4; color: #fff; font-size: 15px; letter-spacing: 0; line-height: 20px; text-align: center; }
.tray { margin-left: auto; display: flex; align-items: center; padding-right: 24px; color: #201f1e; }
.eng { margin: 0 22px 0 26px; }
.spk { margin-left: 8px; } .bat { margin-left: 9px; }
.clock { width: 89px; display: flex; flex-direction: column; align-items: flex-end; line-height: 20px; margin: -2px 12px 0 0; letter-spacing: -0.4px; }
.bell { margin-right: 21px; }
.pre { font: 700 8.5px "Open Sans", sans-serif; letter-spacing: 0; }
```
